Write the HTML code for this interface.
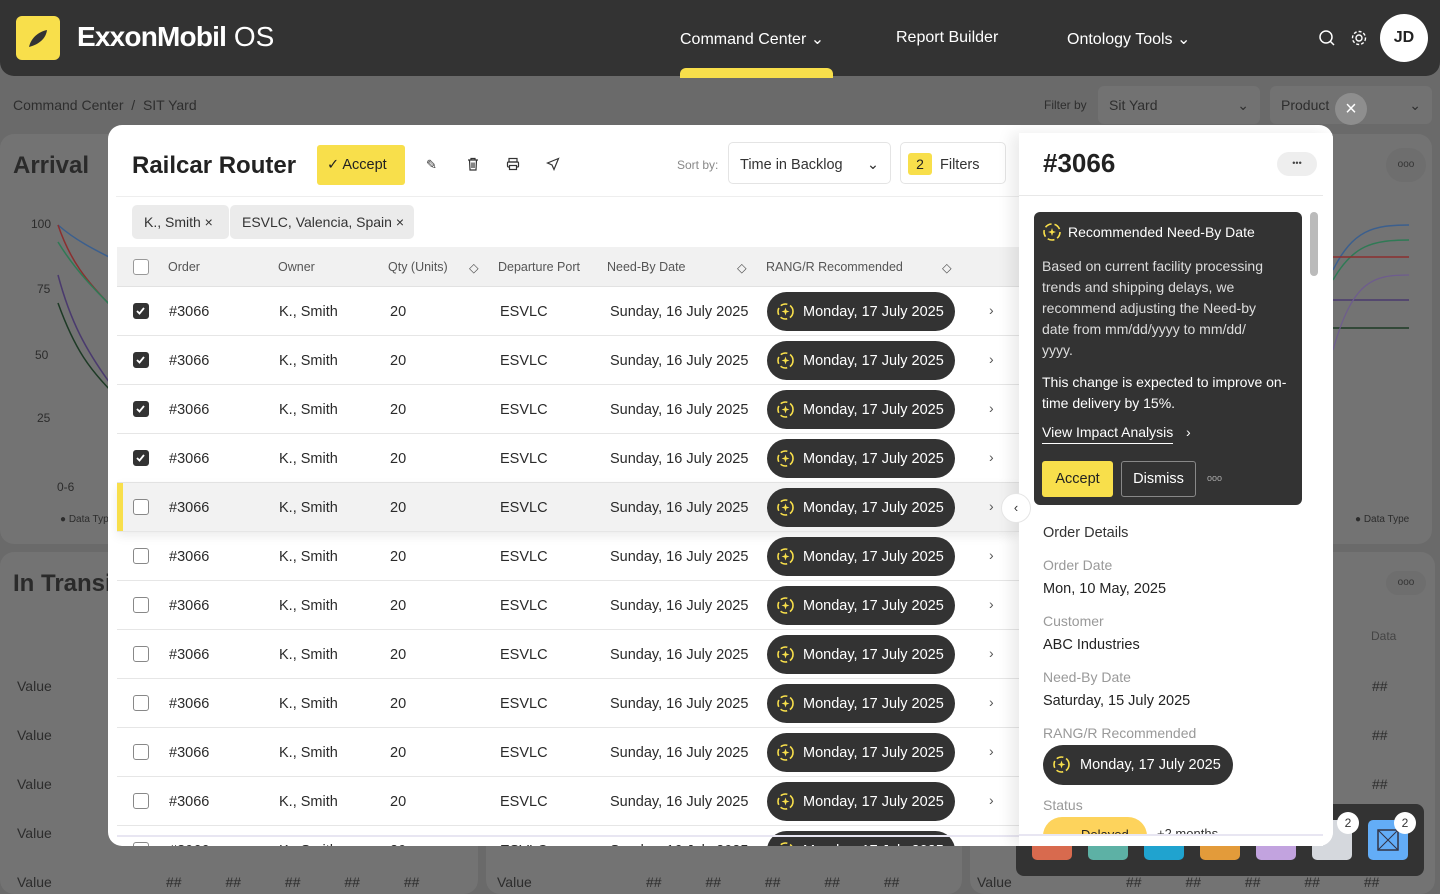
<!DOCTYPE html>
<html><head><meta charset="utf-8"><style>
*{box-sizing:border-box;margin:0;padding:0}
body{width:1440px;height:894px;overflow:hidden;background:#6a6a6a;font-family:"Liberation Sans",sans-serif;position:relative;color:#222}
.abs{position:absolute}
.hdr{left:0;top:0;width:1440px;height:76px;background:#333;border-radius:0 0 14px 14px}
.nav{color:#fff;font-size:16px;top:29px}
.bgcard{background:#737373;border-radius:14px}
.bgt{color:#2a2a2a;font-weight:bold;font-size:24px}
.val{color:#2c2c2c;font-size:14px}
.modal{left:108px;top:125px;width:1225px;height:721px;background:#fff;border-radius:14px;overflow:hidden}
.row{position:absolute;left:9px;width:902px;height:49px;border-bottom:1px solid #e6e6e6;font-size:14.5px;color:#2a2a2a}
.row span{position:absolute;top:17px}
.cb{position:absolute;left:16px;top:16px;width:16px;height:16px;border:1.5px solid #888;border-radius:3px;background:#fff}
.cb.on{background:#333;border-color:#333}
.chip{position:absolute;left:650px;top:5px;width:188px;height:39px;border-radius:20px;background:#333;color:#fff;font-size:14.5px;padding:12px 0 0 36px;white-space:nowrap}
.spark{position:absolute;left:9px;top:10px;width:19px;height:19px}
.chev{position:absolute;left:872px;top:15px;color:#555;font-size:14px}
.th{position:absolute;top:13px;font-size:12.5px;color:#555}
.lbl{color:#999;font-size:14px;position:absolute;left:1043px}
.v{color:#222;font-size:14.5px;position:absolute;left:1043px}
</style></head><body>
<div class="abs hdr"></div>
<div class="abs" style="left:16px;top:16px;width:44px;height:44px;background:#f8df4b;border-radius:6px"><svg width="44" height="44"><path d="M13 31 C15 22 22 16 31 14 C30 22 24 28 13 31Z" fill="#333"/></svg></div>
<div class="abs" style="left:77px;top:21px;color:#fff;font-size:28px;font-weight:bold;letter-spacing:-0.8px">ExxonMobil<span style="font-weight:normal;letter-spacing:0"> OS</span></div>
<div class="abs nav" style="left:680px">Command Center ⌄</div>
<div class="abs" style="left:680px;top:68px;width:153px;height:10px;background:#f8df4b;border-radius:6px 6px 0 0"></div>
<div class="abs nav" style="left:896px">Report Builder</div>
<div class="abs nav" style="left:1067px">Ontology Tools ⌄</div>
<svg class="abs" style="left:1318px;top:29px" width="18" height="18"><circle cx="8" cy="8" r="6" fill="none" stroke="#fff" stroke-width="1.5"/><path d="M12.5 12.5L16 16" stroke="#fff" stroke-width="1.5"/></svg>
<svg class="abs" style="left:1350px;top:29px" width="18" height="18"><circle cx="9" cy="9" r="3" fill="none" stroke="#fff" stroke-width="1.4"/><circle cx="9" cy="9" r="6.5" fill="none" stroke="#fff" stroke-width="1.4" stroke-dasharray="3 2"/></svg>
<div class="abs" style="left:1380px;top:14px;width:48px;height:48px;border-radius:50%;background:#fff;font-weight:bold;font-size:16px;text-align:center;line-height:48px">JD</div>
<div class="abs" style="left:13px;top:97px;color:#2e2e2e;font-size:14px">Command Center &nbsp;/ &nbsp;SIT Yard</div>
<div class="abs" style="left:1044px;top:98px;color:#2e2e2e;font-size:12px">Filter by</div>
<div class="abs" style="left:1098px;top:86px;width:162px;height:38px;background:#727272;border-radius:6px;color:#2e2e2e;font-size:14px;padding:11px 11px">Sit Yard<span style="float:right">⌄</span></div>
<div class="abs" style="left:1270px;top:86px;width:162px;height:38px;background:#727272;border-radius:6px;color:#2e2e2e;font-size:14px;padding:11px 11px">Product<span style="float:right">⌄</span></div>
<div class="abs" style="left:1335px;top:93px;width:32px;height:32px;border-radius:50%;background:#8e8e8e;color:#fff;text-align:center;line-height:32px;font-size:20px">×</div>
<div class="abs bgcard" style="left:0;top:134px;width:1432px;height:410px"></div>
<div class="abs bgt" style="left:13px;top:152px">Arrival</div>
<div class="abs val" style="left:31px;top:217px;font-size:12px">100</div>
<div class="abs val" style="left:37px;top:282px;font-size:12px">75</div>
<div class="abs val" style="left:35px;top:348px;font-size:12px">50</div>
<div class="abs val" style="left:37px;top:411px;font-size:12px">25</div>
<div class="abs val" style="left:57px;top:480px;font-size:12px">0-6</div>
<div class="abs val" style="left:60px;top:514px;font-size:10px">● Data Type</div>
<svg class="abs" style="left:55px;top:220px" width="60" height="180"><path d="M3 5 C20 20 40 30 60 40" stroke="#3b5f8e" fill="none" stroke-width="1.5"/><path d="M3 5 C15 40 30 60 60 90" stroke="#8b2f2f" fill="none" stroke-width="1.5"/><path d="M3 22 C20 50 40 70 60 90" stroke="#2f7a55" fill="none" stroke-width="1.5"/><path d="M3 55 C15 100 30 130 60 170" stroke="#4a3a6e" fill="none" stroke-width="1.5"/><path d="M3 83 C20 130 35 150 60 175" stroke="#1d3a25" fill="none" stroke-width="1.5"/></svg>
<svg class="abs" style="left:1333px;top:210px" width="76" height="200"><path d="M0 60 C20 20 40 15 76 15" stroke="#3b5f8e" fill="none" stroke-width="1.5"/><path d="M0 70 C20 35 40 30 76 30" stroke="#2f7a55" fill="none" stroke-width="1.5"/><path d="M0 47H76" stroke="#8b2f2f" stroke-width="1.5"/><path d="M0 90H76" stroke="#4a3a6e" stroke-width="1.5"/><path d="M0 118H76" stroke="#1d3a25" stroke-width="1.5"/><path d="M0 140 C20 70 40 65 76 65" stroke="#6e5c8e" fill="none" stroke-width="1.2"/></svg>
<div class="abs val" style="left:1355px;top:514px;font-size:10px">● Data Type</div>
<div class="abs" style="left:1386px;top:148px;width:40px;height:34px;border-radius:17px;background:#6e6e6e;color:#333;text-align:center;line-height:34px;font-size:10px">ooo</div>
<div class="abs bgcard" style="left:0;top:552px;width:478px;height:342px"></div>
<div class="abs bgcard" style="left:486px;top:552px;width:476px;height:342px"></div>
<div class="abs bgcard" style="left:970px;top:552px;width:465px;height:342px"></div>
<div class="abs bgt" style="left:13px;top:570px">In Transit</div>
<div class="abs" style="left:1386px;top:571px;width:40px;height:24px;border-radius:12px;background:#6e6e6e;color:#333;text-align:center;line-height:24px;font-size:10px">ooo</div>
<div class="abs val" style="left:1371px;top:629px;font-size:12px;color:#444">Data</div>
<div class="abs val" style="left:17px;top:678px">Value</div><div class="abs val" style="left:17px;top:727px">Value</div><div class="abs val" style="left:17px;top:776px">Value</div><div class="abs val" style="left:17px;top:825px">Value</div><div class="abs val" style="left:17px;top:874px">Value</div>
<div class="abs val" style="left:497px;top:874px">Value</div><div class="abs val" style="left:977px;top:874px">Value</div>
<div class="abs val" style="left:166px;top:874px;word-spacing:40px">## ## ## ## ##</div>
<div class="abs val" style="left:646px;top:874px;word-spacing:40px">## ## ## ## ##</div>
<div class="abs val" style="left:1126px;top:874px;word-spacing:40px">## ## ## ## ##</div>
<div class="abs val" style="left:1372px;top:678px">##</div><div class="abs val" style="left:1372px;top:727px">##</div><div class="abs val" style="left:1372px;top:776px">##</div>
<div class="abs" style="left:1016px;top:804px;width:408px;height:72px;background:#333;border-radius:8px"></div>
<div class="abs" style="left:1032px;top:820px;width:40px;height:40px;border-radius:5px;background:#d86a4e"></div>
<div class="abs" style="left:1088px;top:820px;width:40px;height:40px;border-radius:5px;background:#5db1a5"></div>
<div class="abs" style="left:1144px;top:820px;width:40px;height:40px;border-radius:5px;background:#20a3cf"></div>
<div class="abs" style="left:1200px;top:820px;width:40px;height:40px;border-radius:5px;background:#e39b3a"></div>
<div class="abs" style="left:1256px;top:820px;width:40px;height:40px;border-radius:5px;background:#c2a3df"></div>
<div class="abs" style="left:1312px;top:820px;width:40px;height:40px;border-radius:5px;background:#d5d8dd"></div>
<div class="abs" style="left:1368px;top:820px;width:40px;height:40px;border-radius:5px;background:#63adf7"><svg width="40" height="40"><rect x="10" y="10" width="20" height="20" fill="none" stroke="#334" stroke-width="1.5"/><path d="M10 10L30 30M30 10L10 30" stroke="#334" stroke-width="1"/></svg></div>
<div class="abs" style="left:1337px;top:812px;width:22px;height:22px;border-radius:50%;background:#fff;font-size:12px;text-align:center;line-height:22px;color:#333">2</div>
<div class="abs" style="left:1394px;top:812px;width:22px;height:22px;border-radius:50%;background:#fff;font-size:12px;text-align:center;line-height:22px;color:#333">2</div>

<div class="abs modal">
 <div class="abs" style="left:24px;top:27px;font-size:24px;font-weight:bold;color:#222">Railcar Router</div>
 <div class="abs" style="left:209px;top:20px;width:88px;height:40px;background:#f8df4b;border-radius:3px;font-size:14.5px;padding:12px 0 0 10px;color:#222">✓ Accept</div>
 <div class="abs" style="left:318px;top:32px;font-size:13px;color:#333">✎</div>
 <svg class="abs" style="left:358px;top:32px" width="14" height="14"><path d="M2 3H12M5 3V1.5H9V3M3.5 3L4 13H10L10.5 3M6 5.5V11M8 5.5V11" stroke="#333" fill="none" stroke-width="1.2"/></svg>
 <svg class="abs" style="left:398px;top:32px" width="14" height="14"><rect x="3" y="1.5" width="8" height="3.5" fill="none" stroke="#333" stroke-width="1.2"/><rect x="1.5" y="5" width="11" height="5" rx="1" fill="none" stroke="#333" stroke-width="1.2"/><rect x="3.5" y="8.5" width="7" height="4" fill="#fff" stroke="#333" stroke-width="1.2"/></svg>
 <svg class="abs" style="left:438px;top:32px" width="14" height="14"><path d="M12.5 1.5L1.5 6L6 8L8 12.5Z" fill="none" stroke="#333" stroke-width="1.2"/></svg>
 <div class="abs" style="left:569px;top:33px;font-size:12px;color:#888">Sort by:</div>
 <div class="abs" style="left:620px;top:17px;width:163px;height:42px;border:1px solid #e4e4e4;border-radius:5px;font-size:14.5px;color:#333;padding:14px 11px 0">Time in Backlog<span style="float:right">⌄</span></div>
 <div class="abs" style="left:792px;top:17px;width:106px;height:42px;border:1px solid #e4e4e4;border-radius:5px;font-size:14.5px;color:#333;padding:14px 0 0 39px">Filters</div>
 <div class="abs" style="left:800px;top:28px;width:24px;height:22px;background:#f8df4b;border-radius:3px;text-align:center;line-height:22px;font-size:14px">2</div>
 <div class="abs" style="left:8px;top:71px;width:903px;height:1px;background:#eee"></div>
 <div class="abs" style="left:24px;top:80px;width:97px;height:34px;background:#ebebeb;border-radius:5px;font-size:14px;padding:9px 12px;color:#333;white-space:nowrap">K., Smith ×</div>
 <div class="abs" style="left:122px;top:80px;width:184px;height:34px;background:#ebebeb;border-radius:5px;font-size:14px;padding:9px 12px;color:#333;white-space:nowrap">ESVLC, Valencia, Spain ×</div>
 <div class="abs" style="left:9px;top:122px;width:902px;height:40px;background:#f1f1f1;border-bottom:1px solid #e2e2e2">
  <div class="cb" style="left:16px;top:12px;border-color:#999"></div>
  <span class="th" style="left:51px">Order</span><span class="th" style="left:161px">Owner</span><span class="th" style="left:271px">Qty (Units)</span><span class="th" style="left:352px">◇</span><span class="th" style="left:381px">Departure Port</span><span class="th" style="left:490px">Need-By Date</span><span class="th" style="left:620px">◇</span><span class="th" style="left:649px">RANG/R Recommended</span><span class="th" style="left:825px">◇</span>
 </div>
 <div id="rows"></div>
 <div class="abs" style="left:9px;top:710px;width:902px;height:2px;background:#e8e6f2"></div>
 <div class="abs" style="left:911px;top:8px;width:314px;height:713px;background:#fff;box-shadow:-8px 0 14px rgba(0,0,0,0.08)"></div>
 <div class="abs" style="left:893px;top:368px;width:30px;height:30px;border-radius:50%;background:#fff;border:1px solid #e5e5e5;text-align:center;line-height:28px;font-size:13px;color:#333">‹</div>
</div>
<div class="abs" style="left:1043px;top:148px;font-size:26px;font-weight:bold;color:#222">#3066</div>
<div class="abs" style="left:1277px;top:152px;width:40px;height:24px;border-radius:12px;background:#eee;text-align:center;line-height:22px;font-size:9px;color:#444">•••</div>
<div class="abs" style="left:1019px;top:195px;width:304px;height:1px;background:#e8e8e8"></div>
<div class="abs" style="left:1034px;top:212px;width:268px;height:293px;background:#333;border-radius:6px;color:#eee">
 <svg class="abs" style="left:8px;top:10px" width="20" height="20"><circle cx="10" cy="10" r="8" fill="none" stroke="#f8df4b" stroke-width="1.6" stroke-dasharray="7 3"/><path d="M10 6L11 9L14 10L11 11L10 14L9 11L6 10L9 9Z" fill="#f8df4b"/></svg>
 <div class="abs" style="left:34px;top:12px;font-size:14px;color:#fff">Recommended Need-By Date</div>
 <div class="abs" style="left:8px;top:44px;width:236px;font-size:14px;line-height:21px;color:#ddd">Based on current facility processing trends and shipping delays, we recommend adjusting the Need-by date from mm/dd/yyyy to mm/dd/<br>yyyy.</div>
 <div class="abs" style="left:8px;top:160px;width:262px;font-size:14px;line-height:21px;color:#fff">This change is expected to improve on-time delivery by 15%.</div>
 <div class="abs" style="left:8px;top:212px;font-size:14px;color:#fff;border-bottom:1px solid #fff;padding-bottom:3px">View Impact Analysis</div><div class="abs" style="left:152px;top:212px;color:#fff;font-size:14px">›</div>
 <div class="abs" style="left:8px;top:249px;width:71px;height:36px;background:#f8df4b;border-radius:3px;color:#222;font-size:14.5px;text-align:center;line-height:36px">Accept</div>
 <div class="abs" style="left:87px;top:249px;width:75px;height:36px;border:1px solid #888;border-radius:3px;color:#fff;font-size:14.5px;text-align:center;line-height:34px">Dismiss</div>
 <div class="abs" style="left:173px;top:261px;font-size:9px;color:#aaa">ooo</div>
</div>
<div class="abs" style="left:1310px;top:212px;width:8px;height:64px;background:#bbb;border-radius:4px"></div>
<div class="abs" style="left:1043px;top:525px;font-size:14.5px;color:#333">Order Details</div>
<div class="lbl" style="top:557px">Order Date</div><div class="v" style="top:581px">Mon, 10 May, 2025</div>
<div class="lbl" style="top:613px">Customer</div><div class="v" style="top:637px">ABC Industries</div>
<div class="lbl" style="top:669px">Need-By Date</div><div class="v" style="top:693px">Saturday, 15 July 2025</div>
<div class="lbl" style="top:725px">RANG/R Recommended</div>
<div class="abs chip" style="left:1043px;top:745px;width:190px;height:40px;padding:12px 0 0 37px">Monday, 17 July 2025<svg class="spark" width="19" height="19"><circle cx="9.5" cy="9.5" r="7.5" fill="none" stroke="#f8df4b" stroke-width="1.6" stroke-dasharray="7 3"/><path d="M9.5 5.5L10.5 8.5L13.5 9.5L10.5 10.5L9.5 13.5L8.5 10.5L5.5 9.5L8.5 8.5Z" fill="#f8df4b"/></svg></div>
<div class="lbl" style="top:797px">Status</div>
<div class="abs" style="left:1043px;top:817px;width:104px;height:19px;background:#fdd35c;border-radius:20px 20px 0 0;overflow:hidden;font-size:13px;padding:10px 0 0 38px">Delayed</div>
<div class="abs" style="left:1157px;top:826px;height:10px;overflow:hidden;font-size:13px;color:#333">+2 months</div>
<div class="abs" style="left:1019px;top:836px;width:304px;height:10px;background:#fff"></div>
<div class="abs" style="left:1019px;top:834px;width:304px;height:2px;background:#e8e6f2"></div>
<script>
var h='';
for(var i=0;i<12;i++){
 var t=162+i*49, on=i<4, hl=i==4;
 h+='<div class="row" style="top:'+t+'px;'+(hl?'background:#f2f2f2;box-shadow:inset 6px 0 0 #f8df4b,0 4px 10px rgba(0,0,0,0.08);':'')+'">'
 +'<div class="cb'+(on?' on':'')+'">'+(on?'<svg width="13" height="13" style="position:absolute;left:0;top:0"><path d="M3 7L5.5 9.5L10 4" stroke="#fff" stroke-width="1.8" fill="none"/></svg>':'')+'</div>'
 +'<span style="left:52px">#3066</span><span style="left:162px">K., Smith</span><span style="left:273px">20</span><span style="left:383px">ESVLC</span><span style="left:493px">Sunday, 16 July 2025</span>'
 +'<div class="chip">Monday, 17 July 2025<svg class="spark" width="19" height="19"><circle cx="9.5" cy="9.5" r="7.5" fill="none" stroke="#f8df4b" stroke-width="1.6" stroke-dasharray="7 3"/><path d="M9.5 5.5L10.5 8.5L13.5 9.5L10.5 10.5L9.5 13.5L8.5 10.5L5.5 9.5L8.5 8.5Z" fill="#f8df4b"/></svg></div>'
 +'<div class="chev">›</div></div>';
}
document.getElementById('rows').outerHTML=h;
</script>
</body></html>
